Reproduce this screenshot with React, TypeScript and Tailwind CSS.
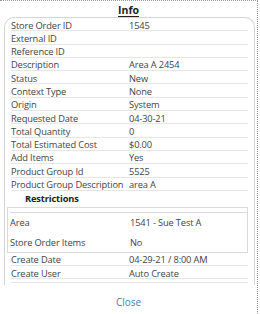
const MAIN_ROWS: [string, string][] = [
  ["Store Order ID", "1545"],
  ["External ID", ""],
  ["Reference ID", ""],
  ["Description", "Area A 2454"],
  ["Status", "New"],
  ["Context Type", "None"],
  ["Origin", "System"],
  ["Requested Date", "04-30-21"],
  ["Total Quantity", "0"],
  ["Total Estimated Cost", "$0.00"],
  ["Add Items", "Yes"],
  ["Product Group Id", "5525"],
  ["Product Group Description", "area A"],
]

const TAIL_ROWS: [string, string][] = [
  ["Create Date", "04-29-21 / 8:00 AM"],
  ["Create User", "Auto Create"],
]

function Row({ label, value }: { label: string; value: string }) {
  return (
    <div className="flex h-[13.3px] items-center border-b border-[#e6e6e6] pt-[2px] leading-none">
      <span className="w-[118px] shrink-0 whitespace-nowrap">{label}</span>
      <span className="whitespace-nowrap">{value}</span>
    </div>
  )
}

export default function App() {
  return (
    <div className="relative h-[314px] w-[260px] overflow-hidden bg-white text-[9.3px] tracking-[-0.15px] text-[#444] [font-family:'Open_Sans',sans-serif]">
      <div className="h-[314px] w-[258px] border-t border-r border-dotted border-[#9a9a9a]">
        <div className="flex h-[16px] items-center justify-center pt-[3px]">
          <span className="text-[10.5px] font-bold tracking-normal text-[#222] underline underline-offset-2">Info</span>
        </div>
        <div className="ml-[4px] h-[268px] w-[251px] overflow-hidden rounded-t-[10px] border border-b-0 border-[#d4d4d4] px-[6px]">
          {MAIN_ROWS.map(([l, v]) => (
            <Row key={l} label={l} value={v} />
          ))}
          <div className="flex h-[16px] items-center pl-[14px] font-bold text-[#222]">Restrictions</div>
          <div className="-ml-[4px] border border-[#dadada] pl-[2px]">
            <div className="h-[5px] border-b border-[#dadada]" />
            <div className="flex h-[21px] items-center">
              <span className="w-[120px] shrink-0">Area</span>
              <span>1541 - Sue Test A</span>
            </div>
            <div className="flex h-[18px] items-center">
              <span className="w-[120px] shrink-0">Store Order Items</span>
              <span>No</span>
            </div>
          </div>
          {TAIL_ROWS.map(([l, v]) => (
            <Row key={l} label={l} value={v} />
          ))}
          <div className="h-[4px] border-b border-[#e6e6e6]" />
        </div>
        <div className="flex h-[29px] items-center justify-center pt-[5px]">
          <span className="text-[10px] tracking-normal text-[#4a7ebb]">Close</span>
        </div>
      </div>
    </div>
  )
}
